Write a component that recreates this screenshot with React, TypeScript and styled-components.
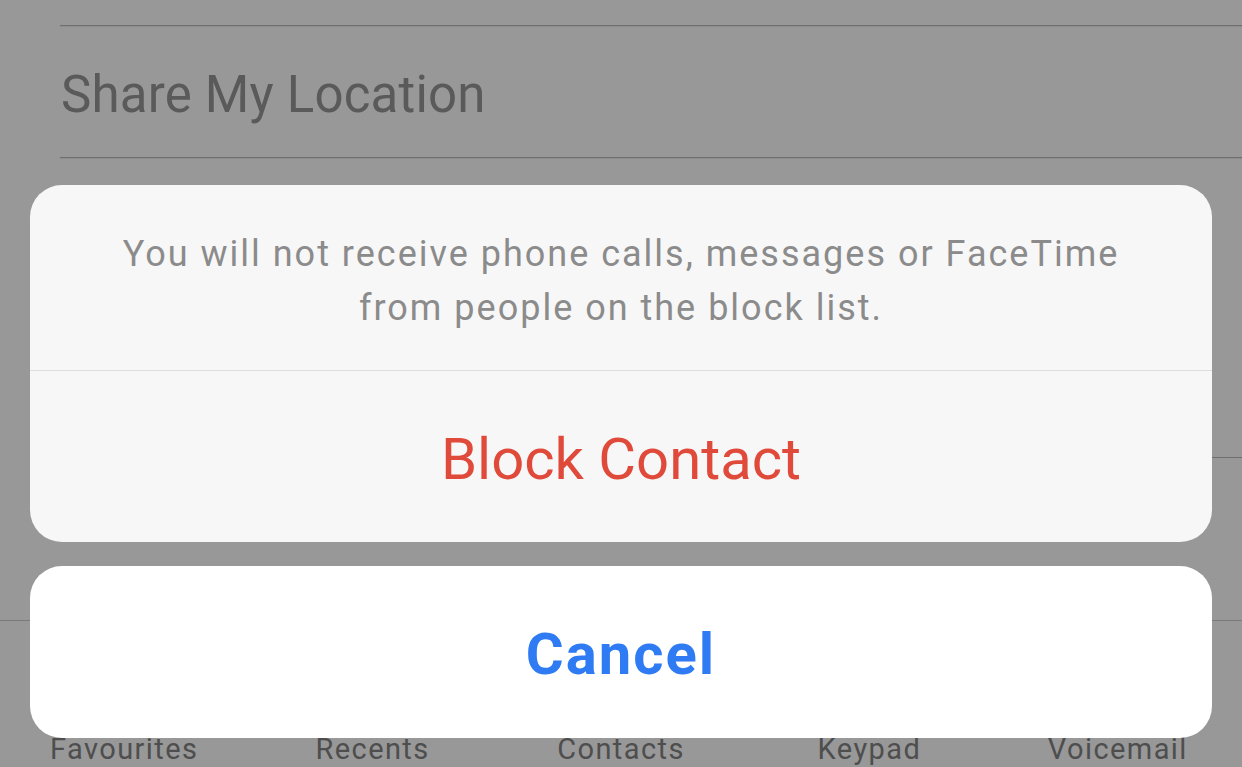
import React from "react";
import styled, { createGlobalStyle } from "styled-components";

const GlobalStyle = createGlobalStyle`
  html, body {
    margin: 0;
    padding: 0;
    background: #989898;
    overflow: hidden;
  }
  * {
    box-sizing: border-box;
  }
`;

const Page = styled.div`
  position: relative;
  width: 100%;
  height: 767px;
  display: flex;
  flex-direction: column;
  background: #989898;
  font-family: Roboto, "Liberation Sans", sans-serif;
  overflow: hidden;
`;

const List = styled.div`
  padding-left: 60px;
  margin-top: 25px;
`;

const Row = styled.div<{ h: number }>`
  height: ${(p) => p.h}px;
  border-top: 1px solid #6f6f6f;
  box-shadow: inset 0 1px 0 #8d8d8d;
  display: flex;
  align-items: center;
`;

const RowLabel = styled.span`
  font-size: 51px;
  letter-spacing: 0.2px;
  color: #5a5a5a;
  padding-left: 1px;
  padding-top: 5px;
`;

const LastLine = styled.div`
  border-top: 1px solid #6f6f6f;
`;

const TabBar = styled.div`
  margin-top: auto;
  height: 147px;
  border-top: 1px solid #7a7a7a;
  display: grid;
  grid-template-columns: repeat(5, 1fr);
  padding-top: 111px;
`;

const TabLabel = styled.span`
  text-align: center;
  font-size: 29px;
  letter-spacing: 1.4px;
  line-height: 34px;
  color: #4e4e4e;
`;

const Sheet = styled.div`
  position: absolute;
  top: 185px;
  left: 30px;
  right: 30px;
  display: flex;
  flex-direction: column;
  gap: 24px;
`;

const Card = styled.div<{ bg: string }>`
  background: ${(p) => p.bg};
  border-radius: 32px;
  overflow: hidden;
  display: flex;
  flex-direction: column;
`;

const Message = styled.div`
  height: 186px;
  display: flex;
  align-items: center;
  justify-content: center;
  text-align: center;
  font-size: 36px;
  letter-spacing: 2px;
  line-height: 54px;
  color: #8b8b8b;
  padding: 6px 10px 0;
  border-bottom: 1px solid #dcdcdc;
`;

const Action = styled.div<{ color: string; bold?: boolean; h: number; spacing?: number }>`
  height: ${(p) => p.h}px;
  display: flex;
  align-items: center;
  justify-content: center;
  font-size: 58px;
  font-weight: ${(p) => (p.bold ? 700 : 400)};
  letter-spacing: ${(p) => p.spacing ?? 0}px;
  color: ${(p) => p.color};
  padding-top: 4px;
`;

const tabs = ["Favourites", "Recents", "Contacts", "Keypad", "Voicemail"];

export default function App() {
  return (
    <>
      <GlobalStyle />
      <Page>
        <List>
          <Row h={132}>
            <RowLabel>Share My Location</RowLabel>
          </Row>
          <Row h={300} />
          <LastLine />
        </List>
        <TabBar>
          {tabs.map((t) => (
            <TabLabel key={t}>{t}</TabLabel>
          ))}
        </TabBar>
        <Sheet>
          <Card bg="#f7f7f7">
            <Message>
              You will not receive phone calls, messages or FaceTime
              <br />
              from people on the block list.
            </Message>
            <Action color="#e04a3b" h={171}>
              Block Contact
            </Action>
          </Card>
          <Card bg="#ffffff">
            <Action color="#2e7bf3" bold h={172} spacing={2}>
              Cancel
            </Action>
          </Card>
        </Sheet>
      </Page>
    </>
  );
}
